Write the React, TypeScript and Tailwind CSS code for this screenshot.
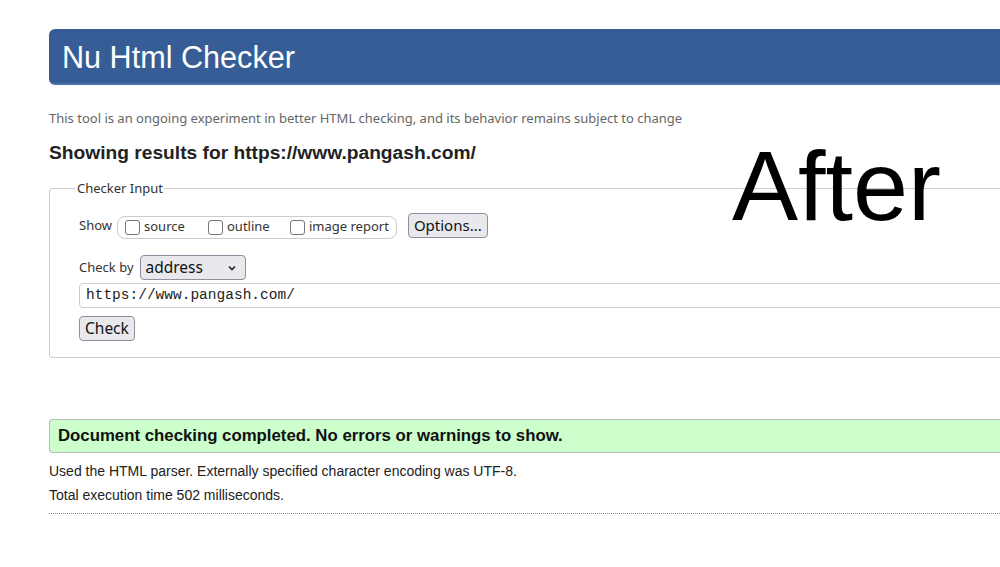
import React from 'react';

const ui = "font-['Noto_Sans','Open_Sans',sans-serif]";
const arial = "font-['Liberation_Sans',Arial,sans-serif]";

function Box() {
  return <span className="inline-block w-[15px] h-[15px] border border-[#767676] rounded-[3px] bg-white mr-[4px]" />;
}

export default function App() {
  return (
    <div className="relative w-[1000px] h-[567px] overflow-hidden bg-white text-[#222]">
      <div className="w-[1100px] pl-[49px] pt-[29px]">
        <div className={`h-[56px] bg-[#365d95] border-b-2 border-[#4a6fa5] rounded-l-md flex items-center pl-[13px] pt-[3px] text-white text-[30.6px] ${arial}`}>
          Nu Html Checker
        </div>

        <p className={`mt-[24px] text-[13px] leading-[18px] text-[#666] ${ui}`}>
          This tool is an ongoing experiment in better HTML checking, and its behavior remains subject to change
        </p>

        <h2 className={`mt-[15px] text-[19.2px] leading-[22px] font-bold text-[#222] ${arial}`}>
          Showing results for https://www.pangash.com/
        </h2>

        <fieldset className={`mt-[15px] border border-[#ccc] rounded-[3px] pl-[29px] pb-[16px] ${ui}`}>
          <legend className="ml-[-4px] pl-[2px] pr-[1px] text-[13px] leading-[18px] text-[#333]">Checker Input</legend>

          <div className="mt-[16px] flex items-center h-[25px] text-[13px] text-[#333]">
            <span className="mr-[5px]">Show</span>
            <div className="flex items-center h-[23px] mt-[3px] border border-[#ccc] rounded-[8px] pl-[7px] pr-[7px]">
              <label className="flex items-center w-[83px]"><Box />source</label>
              <label className="flex items-center w-[82px]"><Box />outline</label>
              <label className="flex items-center"><Box />image report</label>
            </div>
            <button className="ml-[11px] h-[25px] px-[5px] bg-[#e9e9ed] border border-[#8f8f9d] rounded-[4px] text-[15px] text-[#111]">
              Options...
            </button>
          </div>

          <div className="mt-[17px] flex items-center h-[25px] text-[13px] text-[#333]">
            <span className="mr-[6px]">Check by</span>
            <div className="flex items-center justify-between w-[106px] h-[25px] pl-[5px] pr-[8px] bg-[#e9e9ed] border border-[#8f8f9d] rounded-[4px] text-[15.5px] text-[#111]">
              <span>address</span>
              <svg width="10" height="10" viewBox="0 0 10 10" fill="none" stroke="#222" strokeWidth="1.6">
                <path d="M2 3.5 5 6.5 8 3.5" />
              </svg>
            </div>
          </div>

          <div className="mt-[3px] h-[25px] border border-[#ccc] rounded-[4px] flex items-center pl-[6px] font-['Liberation_Mono',monospace] text-[14.5px] text-[#222]">
            https://www.pangash.com/
          </div>

          <button className="mt-[8px] h-[25px] px-[5px] bg-[#e9e9ed] border border-[#8f8f9d] rounded-[4px] text-[15.5px] text-[#111]">
            Check
          </button>
        </fieldset>

        <div className={`mt-[61px] h-[34px] bg-[#ccffcc] border-y border-l border-[#bbb] rounded-l-[4px] flex items-center pl-[8px] text-[16.8px] font-bold text-[#111] ${arial}`}>
          Document checking completed. No errors or warnings to show.
        </div>

        <p className={`mt-[8px] text-[14px] leading-[20px] text-[#222] ${arial}`}>
          Used the HTML parser. Externally specified character encoding was UTF-8.
        </p>
        <p className={`mt-[4px] text-[14px] leading-[20px] text-[#222] ${arial}`}>
          Total execution time 502 milliseconds.
        </p>
        <div className="mt-[8px] border-t border-dotted border-[#888]" />
      </div>

      <div className={`absolute left-[732px] top-[136px] text-[99px] leading-none text-black ${arial}`}>
        After
      </div>
    </div>
  );
}
